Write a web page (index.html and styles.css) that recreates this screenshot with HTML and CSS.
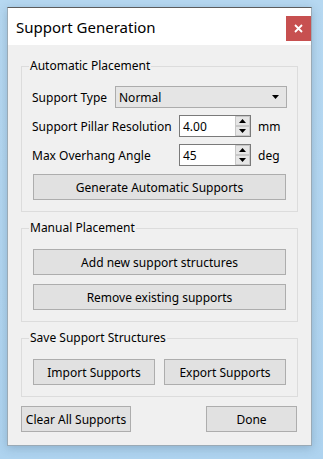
FILE: index.html
```html
<!DOCTYPE html>
<html>
<head>
<meta charset="utf-8">
<link rel="stylesheet" href="styles.css">
</head>
<body>
<div class="window">
  <div class="titlebar">
    <span class="title">Support Generation</span>
    <div class="close"><svg width="9" height="9" viewBox="0 0 9 9"><path d="M1 1 L8 8 M8 1 L1 8" stroke="#fff" stroke-width="1.8" fill="none"/></svg></div>
  </div>
  <div class="content">
    <fieldset class="group g1">
      <legend>Automatic Placement</legend>
      <div class="row-type">
        <span class="lbl-type">Support Type</span>
        <div class="combo"><span>Normal</span><svg width="7" height="4" viewBox="0 0 7 4"><path d="M0 0 H7 L3.5 4 Z" fill="#000"/></svg></div>
      </div>
      <div class="spin-grid">
        <span class="lbl">Support Pillar Resolution</span>
        <div class="spin"><span class="val">4.00</span>
          <div class="spin-btns">
            <div class="sb"><svg width="7" height="4" viewBox="0 0 7 4"><path d="M0 4 H7 L3.5 0 Z" fill="#000"/></svg></div>
            <div class="sb"><svg width="7" height="4" viewBox="0 0 7 4"><path d="M0 0 H7 L3.5 4 Z" fill="#000"/></svg></div>
          </div>
        </div>
        <span class="unit">mm</span>
        <span class="lbl">Max Overhang Angle</span>
        <div class="spin"><span class="val">45</span>
          <div class="spin-btns">
            <div class="sb"><svg width="7" height="4" viewBox="0 0 7 4"><path d="M0 4 H7 L3.5 0 Z" fill="#000"/></svg></div>
            <div class="sb"><svg width="7" height="4" viewBox="0 0 7 4"><path d="M0 0 H7 L3.5 4 Z" fill="#000"/></svg></div>
          </div>
        </div>
        <span class="unit">deg</span>
      </div>
      <div class="btn wide gen">Generate Automatic Supports</div>
    </fieldset>
    <fieldset class="group g2">
      <legend>Manual Placement</legend>
      <div class="btn wide">Add new support structures</div>
      <div class="btn wide second">Remove existing supports</div>
    </fieldset>
    <fieldset class="group g3">
      <legend>Save Support Structures</legend>
      <div class="pair">
        <div class="btn half">Import Supports</div>
        <div class="btn half">Export Supports</div>
      </div>
    </fieldset>
    <div class="bottom">
      <div class="btn clear">Clear All Supports</div>
      <div class="btn done">Done</div>
    </div>
  </div>
</div>
</body>
</html>
```

FILE: styles.css
```css
html, body {
  margin: 0;
  padding: 0;
}
body {
  width: 323px;
  height: 459px;
  overflow: hidden;
  background: linear-gradient(180deg, #b6d8f1 0%, #aed3ef 100%);
  padding: 7px 0 0 7px;
  box-sizing: border-box;
  font-family: "Noto Sans", "DejaVu Sans", sans-serif;
  font-size: 12px;
  color: #000;
}
.window {
  width: 305px;
  height: 439px;
  box-sizing: border-box;
  border: 1px solid #9aaab6;
  border-top-color: #5c5c5c;
  background: #f0f0f0;
  box-shadow: 0 2px 9px rgba(40, 70, 100, 0.25);
  display: flex;
  flex-direction: column;
}
.titlebar {
  height: 37px;
  background: #fff;
  display: flex;
  align-items: flex-start;
  justify-content: space-between;
}
.title {
  font-size: 15px;
  line-height: 20px;
  padding: 9px 0 0 8px;
}
.close {
  width: 25px;
  height: 25px;
  margin-top: 8px;
  background: #c75050;
  display: flex;
  align-items: center;
  justify-content: center;
}
.content {
  display: flex;
  flex-direction: column;
  padding: 13px 13px 0 13px;
}
.group {
  margin: 0;
  border: 1px solid #dcdcdc;
  padding: 0 10px 11px 10px;
  display: flex;
  flex-direction: column;
  min-width: 0;
}
.group legend {
  padding: 0 1px;
  margin-left: -3px;
  line-height: 16px;
  height: 16px;
}
.g2, .g3 {
  margin-top: 8px;
}
.row-type {
  margin-top: 12px;
  display: flex;
  align-items: center;
  height: 22px;
}
.lbl-type {
  width: 83px;
  flex: none;
  white-space: nowrap;
}
.combo {
  flex: 1;
  height: 22px;
  box-sizing: border-box;
  background: #e5e5e5;
  border: 1px solid #acacac;
  display: flex;
  align-items: center;
  justify-content: space-between;
  padding: 0 7px 0 3px;
}
.spin-grid {
  margin-top: 7px;
  display: grid;
  grid-template-columns: 140px 72px auto;
  column-gap: 7px;
  row-gap: 7px;
  align-items: center;
}
.lbl {
  white-space: nowrap;
}
.spin {
  height: 22px;
  box-sizing: border-box;
  background: #fff;
  border: 1px solid #7a7a7a;
  display: flex;
  align-items: center;
  justify-content: space-between;
  padding-left: 3px;
}
.spin-btns {
  width: 15px;
  height: 20px;
  display: flex;
  flex-direction: column;
}
.sb {
  flex: 1;
  box-sizing: border-box;
  background: #e6e6e6;
  border: 1px solid #c8c8c8;
  display: flex;
  align-items: center;
  justify-content: center;
}
.btn {
  height: 26px;
  box-sizing: border-box;
  background: #e1e1e1;
  border: 1px solid #adadad;
  display: flex;
  align-items: center;
  justify-content: center;
  white-space: nowrap;
}
.wide {
  margin: 0 1px;
}
.gen {
  margin-top: 8px;
}
.g2 .btn:first-of-type {
  margin-top: 13px;
}
.second {
  margin-top: 9px;
}
.pair {
  margin: 13px 1px 0 1px;
  display: flex;
  gap: 9px;
}
.half {
  flex: 1;
}
.bottom {
  margin-top: 9px;
  display: flex;
  justify-content: space-between;
}
.clear {
  width: 110px;
}
.done {
  width: 91px;
  margin-right: 1px;
}
```
